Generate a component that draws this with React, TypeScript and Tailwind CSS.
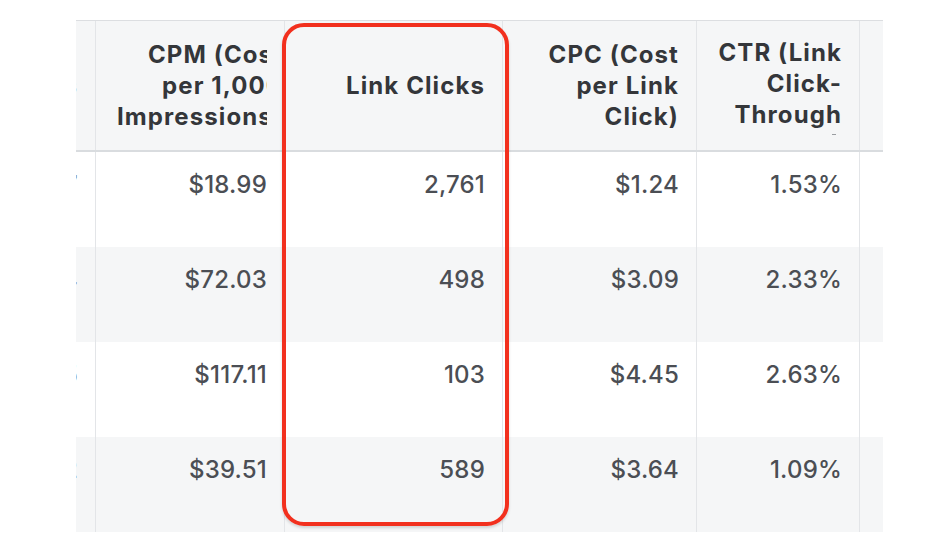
import React from 'react'

const cols = 'grid-cols-[20px_189px_218px_194px_163px_23px]'

const rows = [
  { lead: '1,807', cpm: '$18.99', clicks: '2,761', cpc: '$1.24', ctr: '1.53%' },
  { lead: '2,574', cpm: '$72.03', clicks: '498', cpc: '$3.09', ctr: '2.33%' },
  { lead: '3,925', cpm: '$117.11', clicks: '103', cpc: '$4.45', ctr: '2.63%' },
  { lead: '1,472', cpm: '$39.51', clicks: '589', cpc: '$3.64', ctr: '1.09%' },
]

function HeadCell({ children, last }: { children?: React.ReactNode; last?: boolean }) {
  return (
    <div
      className={`flex items-center justify-end overflow-hidden pr-[17px] ${last ? '' : 'border-r border-[#e3e5e8]'}`}
    >
      <div className="text-right leading-[31px]">{children}</div>
    </div>
  )
}

function Cell({ children, last }: { children?: React.ReactNode; last?: boolean }) {
  return (
    <div
      className={`overflow-hidden pt-[15px] pr-[17px] text-right whitespace-nowrap ${last ? '' : 'border-r border-[#e3e5e8]'}`}
    >
      <div className="flex justify-end">{children}</div>
    </div>
  )
}

export default function App() {
  return (
    <div
      className="relative w-[928px] h-[546px] bg-white overflow-hidden"
      style={{ fontFamily: 'Inter, "Liberation Sans", sans-serif' }}
    >
      <div className="pt-[20px] pl-[76px]">
        <div className="w-[807px] overflow-hidden">
          {/* header */}
          <div
            className={`grid ${cols} h-[132px] bg-[#f5f6f7] border-t border-[#dcdee1] border-b-2 border-b-[#d9dcdf] text-[24px] font-bold tracking-[1.1px] text-[#34363a]`}
          >
            <HeadCell>
              <span className="whitespace-nowrap text-[#8a8d91]">ns</span>
            </HeadCell>
            <div className="flex items-center border-r border-[#e3e5e8] pr-[17px]">
              <div className="w-full overflow-hidden">
                <div className="-mr-[16px] text-right leading-[31px] whitespace-nowrap">
                  CPM (Cost
                  <br />
                  per 1,000
                  <br />
                  Impressions)
                </div>
              </div>
            </div>
            <HeadCell>Link Clicks</HeadCell>
            <HeadCell>
              CPC (Cost
              <br />
              per Link
              <br />
              Click)
            </HeadCell>
            <div className="relative flex items-center justify-end border-r border-[#e3e5e8] pr-[17px]">
              <div className="-mt-[5px] text-right leading-[31px]">
                CTR (Link
                <br />
                Click-
                <br />
                Through
              </div>
              <span className="absolute left-[135px] top-[113px] h-px w-[4px] bg-[#9a9da1]" />
            </div>
            <HeadCell last />
          </div>

          {/* rows */}
          {rows.map((r, i) => (
            <div
              key={i}
              className={`grid ${cols} h-[95px] text-[24px] font-medium tracking-[0.2px] text-[#4b4e54] ${i % 2 === 1 ? 'bg-[#f5f6f7]' : 'bg-white'}`}
            >
              <Cell>
                <span className="text-[#8a8d91]">{r.lead}</span>
              </Cell>
              <Cell>{r.cpm}</Cell>
              <Cell>{r.clicks}</Cell>
              <Cell>{r.cpc}</Cell>
              <Cell>{r.ctr}</Cell>
              <Cell last />
            </div>
          ))}
        </div>
      </div>

      {/* red highlight around Link Clicks */}
      <div className="absolute left-[282px] top-[23px] w-[227px] h-[503px] rounded-[22px] border-[4px] border-[#f2301e] shadow-[0_2px_3px_rgba(0,0,0,0.15)]" />
    </div>
  )
}
